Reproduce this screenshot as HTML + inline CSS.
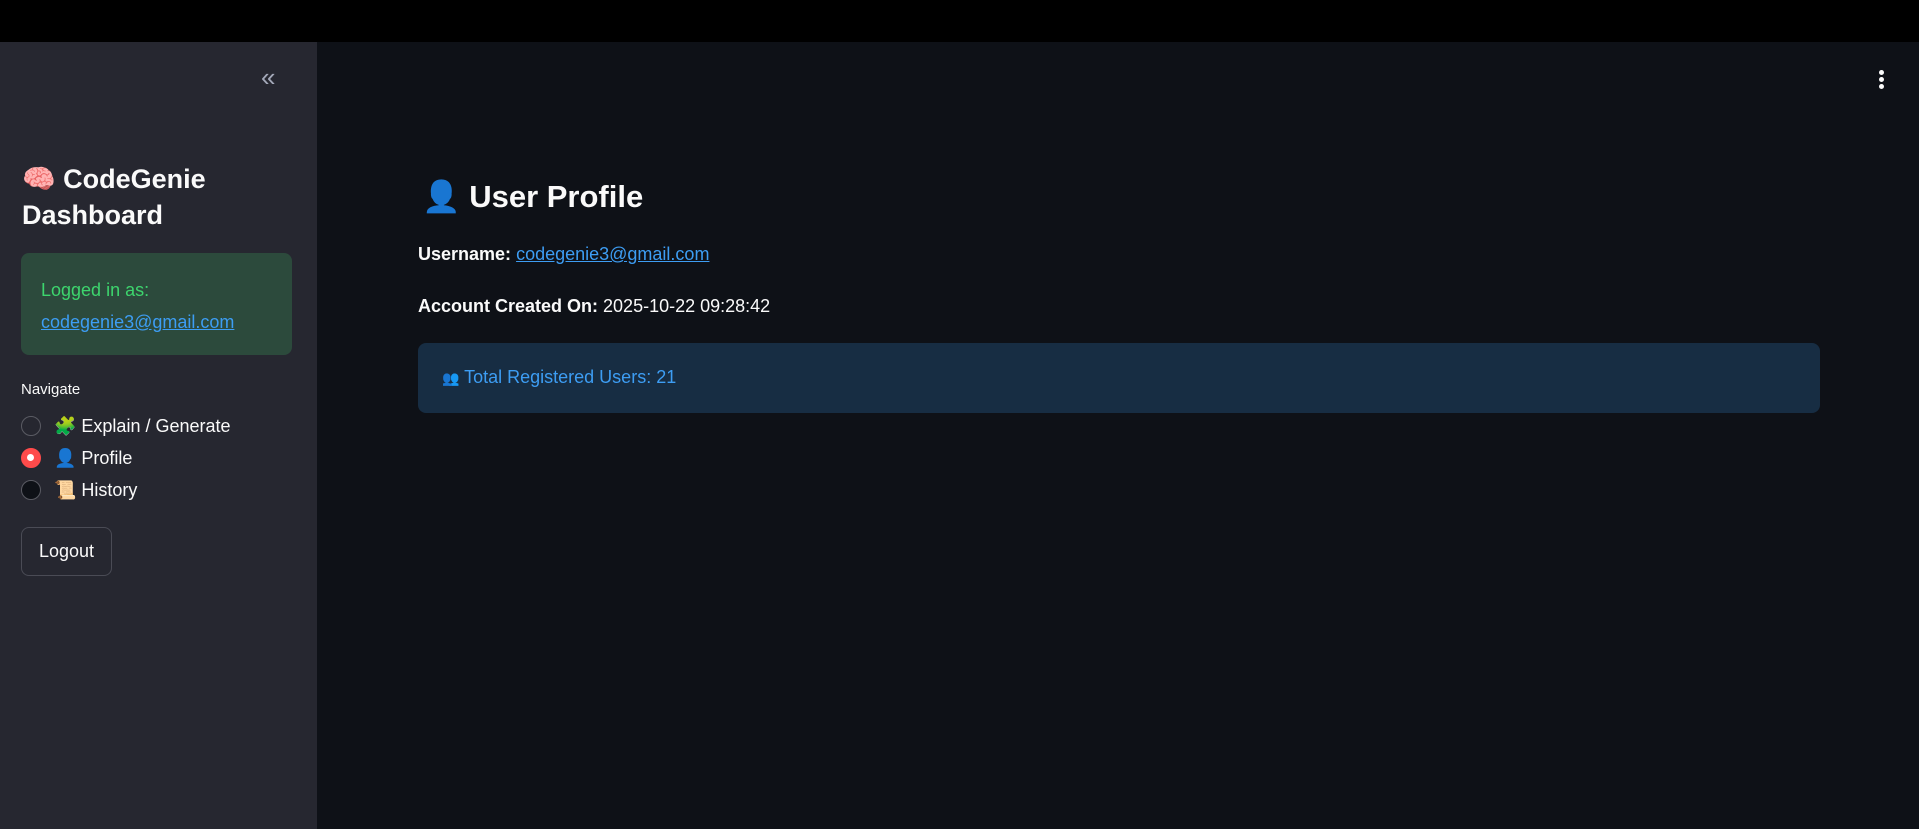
<!DOCTYPE html>
<html><head><meta charset="utf-8"><style>
*{margin:0;padding:0;box-sizing:border-box}
body{width:1919px;height:829px;background:#0e1117;font-family:"Liberation Sans","Noto Sans CJK SC",sans-serif;position:relative;overflow:hidden;color:#fafafa}
.top{position:absolute;left:0;top:0;width:1919px;height:42px;background:#000}
.side{position:absolute;left:0;top:42px;width:317px;height:787px;background:#262730}
.a{position:absolute;white-space:nowrap}
a{color:#3d9df3;text-decoration:underline}
.radio{position:absolute;left:21px;width:20px;height:20px;border-radius:50%;border:1.5px solid #5a5b63;background:#262730}
.dot{position:absolute;left:1879px;width:5px;height:5px;border-radius:50%;background:#fafafa}
</style></head><body>
<div class="top"></div>
<div class="side"></div>
<div class="a" style="left:261px;top:62px;font-size:26px;color:#a3a8b8;letter-spacing:-3px">«</div>
<div class="a" style="left:22px;top:161px;font-size:27px;font-weight:bold;line-height:36px">🧠 CodeGenie<br>Dashboard</div>
<div class="a" style="left:21px;top:253px;width:271px;height:102px;background:#2c4a3c;border-radius:8px"></div>
<div class="a" style="left:41px;top:274px;font-size:18px;color:#3dd56d;line-height:32px">Logged in as:<br><a href="#">codegenie3@gmail.com</a></div>
<div class="a" style="left:21px;top:381px;font-size:15px;color:#fafafa">Navigate</div>
<div class="radio" style="top:416px"></div>
<div class="radio" style="top:448px;background:#ff4b4b;border-color:#ff4b4b"><div style="width:7px;height:7px;background:#fff;border-radius:50%;margin:5px"></div></div>
<div class="radio" style="top:480px;background:#0e1117"></div>
<div class="a" style="left:54px;top:410px;font-size:18px;line-height:32px">🧩 Explain / Generate<br>👤 Profile<br>📜 History</div>
<div class="a" style="left:21px;top:527px;width:91px;height:49px;border:1px solid #4a4b55;border-radius:8px;font-size:18px;line-height:47px;text-align:center">Logout</div>
<div class="dot" style="top:70px"></div><div class="dot" style="top:77px"></div><div class="dot" style="top:84px"></div>
<div class="a" style="left:422px;top:178px;font-size:31px;font-weight:bold">👤 User Profile</div>
<div class="a" style="left:418px;top:244px;font-size:18px"><b>Username:</b> <a href="#">codegenie3@gmail.com</a></div>
<div class="a" style="left:418px;top:296px;font-size:18px"><b>Account Created On:</b> 2025-10-22 09:28:42</div>
<div class="a" style="left:418px;top:343px;width:1402px;height:70px;background:#172d43;border-radius:8px"></div>
<div class="a" style="left:442px;top:367px;font-size:18px;color:#3d9df3"><span style="font-size:14px">👥</span> Total Registered Users: 21</div>
</body></html>
